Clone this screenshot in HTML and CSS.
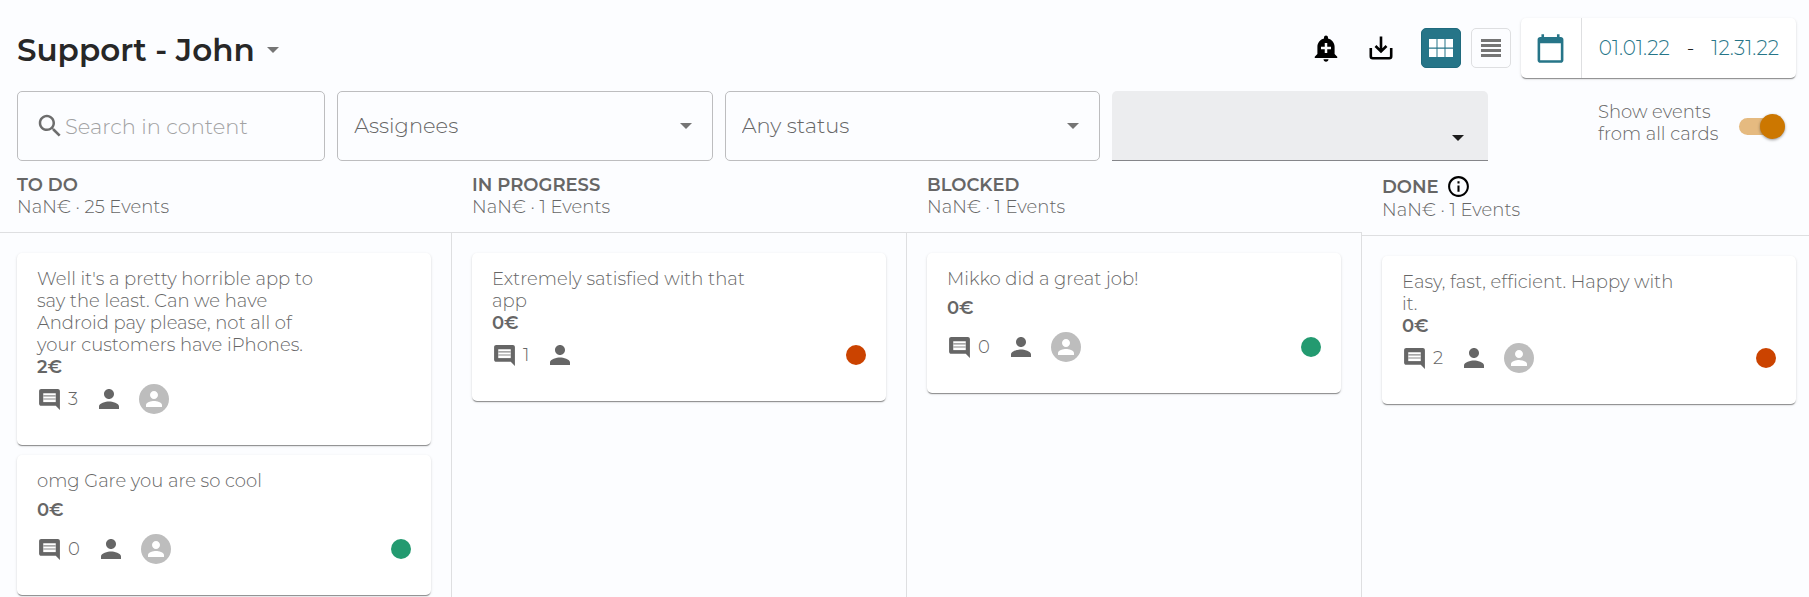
FILE: index.html
```html
<!DOCTYPE html>
<html lang="en">
<head>
<meta charset="utf-8">
<title>Support - John</title>
<link rel="stylesheet" href="styles.css">
</head>
<body>
<svg class="sprite" aria-hidden="true">
  <symbol id="comment" viewBox="0 0 24 24"><path d="M4 2h16c1.100 0 2 .9 2 2v18l-4-4H4c-1.100 0-2-.9-2-2V4c0-1.100.9-2 2-2z"/><path class="paper" d="M6 6h12v8.500H6z"/><path class="rule" d="M6 8h12v1H6zM6 11h12v1H6z"/></symbol>
  <symbol id="person" viewBox="0 0 24 24"><path d="M12 12c2.210 0 4-1.790 4-4s-1.790-4-4-4-4 1.790-4 4 1.790 4 4 4zm0 2c-2.670 0-8 1.340-8 4v2h16v-2c0-2.660-5.330-4-8-4z"/></symbol>
</svg>
<div class="page">
  <header class="topbar">
    <h1 class="title"><button class="title-button" type="button">Support - John<span class="caret"></span></button></h1>
    <div class="actions">
      <button class="icon-button" type="button" aria-label="Add alert"><svg class="icon-30" viewBox="0 0 24 24"><path d="M10.010 21.010c0 1.100.89 1.990 1.990 1.990s1.990-.89 1.990-1.990h-3.980zm8.870-4.190V11c0-3.250-2.250-5.970-5.290-6.690v-.72C13.590 2.710 12.880 2 12 2s-1.590.71-1.590 1.590v.72C7.370 5.030 5.120 7.750 5.120 11v5.820L3 18.940V20h18v-1.060l-2.120-2.120zM16 13.010h-3v3h-2v-3H8V11h3V8h2v3h3v2.010z"/></svg></button>
      <button class="icon-button" type="button" aria-label="Download"><svg class="icon-30 line-icon" viewBox="0 0 30 30"><path d="M4.800 15v8.300a1.900 1.900 0 0 0 1.900 1.900h16.600a1.900 1.900 0 0 0 1.900-1.900V15M15 3.500v15M9.500 13l5.500 5.500 5.500-5.500"/></svg></button>
      <div class="views">
        <button class="view view-active" type="button" aria-label="Board view" aria-pressed="true"><svg class="view-icon" viewBox="0 0 24 18"><path d="M0 0h7.500v8.500H0zM8.500 0h7v8.500h-7zM16.500 0H24v8.500h-7.500zM0 9.800h7.500V18H0zM8.500 9.800h7V18h-7zM16.500 9.800H24V18h-7.500z"/></svg></button>
        <button class="view" type="button" aria-label="List view" aria-pressed="false"><svg class="view-icon" viewBox="0 0 24 18"><path d="M2 0h20v3H2zM2 5h20v3H2zM2 10h20v3H2zM2 15h20v3H2z"/></svg></button>
        <div class="dates">
          <button class="calendar" type="button" aria-label="Calendar"><svg class="calendar-icon" viewBox="0 0 24 24"><path d="M20 3h-1V1h-2v2H7V1H5v2H4c-1.100 0-2 .9-2 2v16c0 1.100.9 2 2 2h16c1.100 0 2-.9 2-2V5c0-1.100-.9-2-2-2zm0 18H4V8h16v13z"/></svg></button>
          <div class="range"><button class="date" type="button">01.01.22</button><span>-</span><button class="date" type="button">12.31.22</button></div>
        </div>
      </div>
    </div>
  </header>

  <div class="filters">
    <label class="search"><svg class="icon-30" viewBox="0 0 24 24"><path d="M15.500 14h-.79l-.28-.27C15.410 12.590 16 11.110 16 9.500 16 5.910 13.090 3 9.500 3S3 5.910 3 9.500 5.910 16 9.500 16c1.610 0 3.090-.59 4.230-1.570l.27.28v.79l5 4.990L20.490 19l-4.990-5zm-6 0C7.010 14 5 11.990 5 9.500S7.010 5 9.500 5 14 7.010 14 9.500 11.990 14 9.500 14z"/></svg><input class="search-input" type="text" placeholder="Search in content" aria-label="Search in content"></label>
    <div class="field"><select class="select" aria-label="Assignees"><option>Assignees</option></select><span class="caret"></span></div>
    <div class="field"><select class="select" aria-label="Status"><option>Any status</option></select><span class="caret"></span></div>
    <div class="field field-filled"><select class="select" aria-label="Filter"><option></option></select><span class="caret"></span></div>
    <label class="toggle"><span class="toggle-text">Show events from all cards</span><input class="switch" type="checkbox" checked></label>
  </div>

  <main class="board">
    <section class="column">
      <header class="head"><h2 class="name">TO DO</h2><p class="total">NaN€ · 25 Events</p></header>
      <div class="list">
        <article class="card">
          <p class="text">Well it's a pretty horrible app to say the least. Can we have Android pay please, not all of your customers have iPhones.</p>
          <p class="price">2€</p>
          <div class="meta"><svg class="comment"><use href="#comment"/></svg><span class="count">3</span><svg class="person"><use href="#person"/></svg><span class="avatar"><svg class="avatar-icon"><use href="#person"/></svg></span></div>
        </article>
        <article class="card card-short">
          <p class="text">omg Gare you are so cool</p>
          <p class="price">0€</p>
          <div class="meta"><svg class="comment"><use href="#comment"/></svg><span class="count">0</span><svg class="person"><use href="#person"/></svg><span class="avatar"><svg class="avatar-icon"><use href="#person"/></svg></span><span class="dot dot-green"></span></div>
        </article>
      </div>
    </section>
    <section class="column">
      <header class="head"><h2 class="name">IN PROGRESS</h2><p class="total">NaN€ · 1 Events</p></header>
      <div class="list">
        <article class="card">
          <p class="text">Extremely satisfied with that app</p>
          <p class="price">0€</p>
          <div class="meta"><svg class="comment"><use href="#comment"/></svg><span class="count">1</span><svg class="person"><use href="#person"/></svg><span class="dot dot-red"></span></div>
        </article>
      </div>
    </section>
    <section class="column">
      <header class="head"><h2 class="name">BLOCKED</h2><p class="total">NaN€ · 1 Events</p></header>
      <div class="list">
        <article class="card card-short">
          <p class="text">Mikko did a great job!</p>
          <p class="price">0€</p>
          <div class="meta"><svg class="comment"><use href="#comment"/></svg><span class="count">0</span><svg class="person"><use href="#person"/></svg><span class="avatar"><svg class="avatar-icon"><use href="#person"/></svg></span><span class="dot dot-green"></span></div>
        </article>
      </div>
    </section>
    <section class="column">
      <header class="head"><h2 class="name">DONE<svg class="info" viewBox="0 0 24 24"><path d="M11 7h2v2h-2zm0 4h2v6h-2zm1-9C6.480 2 2 6.480 2 12s4.480 10 10 10 10-4.480 10-10S17.520 2 12 2zm0 18c-4.410 0-8-3.590-8-8s3.590-8 8-8 8 3.590 8 8-3.590 8-8 8z"/></svg></h2><p class="total">NaN€ · 1 Events</p></header>
      <div class="list">
        <article class="card">
          <p class="text">Easy, fast, efficient. Happy with it.</p>
          <p class="price">0€</p>
          <div class="meta"><svg class="comment"><use href="#comment"/></svg><span class="count">2</span><svg class="person"><use href="#person"/></svg><span class="avatar"><svg class="avatar-icon"><use href="#person"/></svg></span><span class="dot dot-red"></span></div>
        </article>
      </div>
    </section>
  </main>
</div>
</body>
</html>
```
FILE: styles.css
```css
* { box-sizing: border-box; }

body {
  margin: 0;
  background: #fcfdff;
  color: #666;
  font: 300 18px/22px Montserrat, Inter, "Open Sans", sans-serif;
}

h1, h2, p { margin: 0; }

button, input, select {
  margin: 0;
  padding: 0;
  border: 0;
  background: none;
  color: inherit;
  font: inherit;
}

svg { display: block; flex: none; fill: currentColor; }

.sprite { position: absolute; width: 0; height: 0; }

.page { display: flex; flex-direction: column; min-height: 100vh; }

.topbar {
  display: flex;
  align-items: center;
  justify-content: space-between;
  padding: 18px 13px 13px 17px;
}

.title { color: #272727; font-size: 31px; font-weight: 600; line-height: 40px; }

.title-button { display: flex; align-items: center; gap: 12px; padding-top: 3px; }

.caret {
  flex: none;
  border: 6px solid transparent;
  border-top-color: #757575;
  border-bottom: 0;
}

.actions { display: flex; align-items: center; gap: 25px; color: #000; }

.icon-30 { width: 30px; height: 30px; }

.line-icon { fill: none; stroke: currentColor; stroke-width: 2.6px; }

.views { display: flex; align-items: center; gap: 10px; }

.view {
  display: grid;
  place-items: center;
  width: 40px;
  height: 40px;
  border: 1px solid #dedfe1;
  border-radius: 5px;
  color: #757575;
}

.view-active { border-color: #1f6a7d; background: #267588; color: #fff; }

.view-icon { width: 24px; height: 18px; }

.dates {
  display: flex;
  height: 60px;
  border-radius: 5px;
  background: #fff;
  box-shadow: 0 2px 1px -1px rgba(0, 0, 0, .3), 0 1px 1px rgba(0, 0, 0, .14), 0 1px 3px rgba(0, 0, 0, .12);
  color: #267588;
  font-size: 20px;
}

.calendar { display: grid; place-items: center; width: 61px; border-right: 1px solid #dedfe1; }

.calendar-icon { width: 31px; height: 31px; }

.range { display: flex; align-items: center; justify-content: space-between; gap: 17px; padding: 0 17px; }

.range span { color: #222; }

.filters {
  display: grid;
  grid-template-columns: minmax(0, 308fr) repeat(3, minmax(0, 375fr)) minmax(0, 296fr);
  gap: 12px;
  padding: 0 13px 0 17px;
}

.search {
  display: flex;
  align-items: center;
  height: 70px;
  padding-left: 17px;
  border: 1px solid #bdbdbf;
  border-radius: 5px;
  color: #6d6d6d;
}

.search-input { flex: 1; min-width: 0; height: 40px; font-size: 21px; }

.search-input::placeholder { color: #a2a2a3; opacity: 1; }

.field { position: relative; height: 70px; }

.select {
  width: 100%;
  height: 100%;
  padding: 0 48px 0 16px;
  border: 1px solid #bdbdbf;
  border-radius: 5px;
  appearance: none;
  font-size: 21px;
}

.field .caret { position: absolute; top: 32px; right: 21px; pointer-events: none; }

.field-filled .select {
  border: 0;
  border-bottom: 1px solid #85868a;
  border-radius: 5px 5px 0 0;
  background: #ecedef;
}

.field-filled .caret { top: 44px; right: 24px; border-top-color: #1d1d1d; }

.toggle { display: flex; align-items: center; justify-content: flex-end; gap: 17px; padding: 0 17px 6px 0; }

.toggle-text { width: 124px; }

.switch {
  position: relative;
  flex: none;
  width: 40px;
  height: 17px;
  margin-top: 6px;
  border-radius: 9px;
  background: #e5ba80;
  appearance: none;
}

.switch::after {
  content: "";
  position: absolute;
  top: -4px;
  right: -6px;
  width: 25px;
  height: 25px;
  border-radius: 50%;
  background: #cc7700;
  box-shadow: 0 1px 3px rgba(0, 0, 0, .4);
}

.board { display: flex; flex: 1; padding-top: 13px; }

.column {
  --left: 20px;
  --right: 21px;
  display: flex;
  flex: 1 1 0;
  flex-direction: column;
  box-sizing: content-box;
  padding: 0 var(--right) 0 var(--left);
}

.column:first-child { --left: 17px; }

.column:last-child { --right: 13px; }

.head, .list {
  margin: 0 calc(-1 * var(--right)) 0 calc(-1 * var(--left));
  padding-left: var(--left);
  padding-right: var(--right);
}

.head { padding-bottom: 14px; border-bottom: 1px solid #dedfe1; }

.name { display: flex; align-items: center; gap: 7px; font-size: 18px; font-weight: 600; line-height: 22px; }

.info { width: 25px; height: 25px; color: #000; }

.list {
  display: flex;
  flex: 1;
  flex-direction: column;
  gap: 10px;
  padding-top: 20px;
  padding-right: calc(var(--right) - 1px);
  border-right: 1px solid #dedfe1;
}

.column:last-child .list { padding-right: var(--right); border-right: 0; }

.card {
  padding: 15px 20px 31px;
  border-radius: 5px;
  background: #fff;
  box-shadow: 0 2px 1px -1px rgba(0, 0, 0, .3), 0 1px 1px rgba(0, 0, 0, .14), 0 1px 3px rgba(0, 0, 0, .12);
}

.text { width: 76%; }

.price { font-weight: 600; }

.card-short .price { padding: 7px 0; }

.meta { display: flex; align-items: center; height: 30px; margin-top: 6px; }

.comment { width: 25px; height: 25px; margin-right: 6px; }

.paper { fill: #fff; }

.rule { fill: #8a8a8a; }

.count { margin-right: 16px; }

.person { width: 30px; height: 30px; }

.avatar {
  display: grid;
  place-items: center;
  width: 30px;
  height: 30px;
  margin-left: 15px;
  border-radius: 50%;
  background: #bdbdbd;
  color: #fff;
}

.avatar-icon { width: 24px; height: 24px; }

.dot { width: 20px; height: 20px; margin-left: auto; border-radius: 50%; }

.dot-green { background: #239a70; }

.dot-red { background: #cb4300; }
```
